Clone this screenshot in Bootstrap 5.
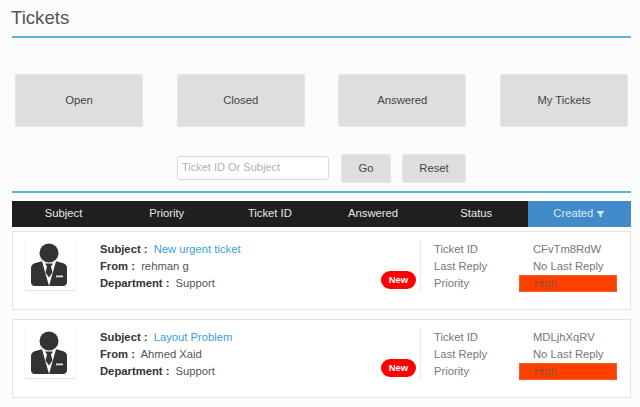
<!DOCTYPE html>
<html lang="en">
<head>
<meta charset="utf-8">
<title>Tickets</title>
<link href="https://cdn.jsdelivr.net/npm/bootstrap@5.3.0/dist/css/bootstrap.min.css" rel="stylesheet">
<style>
html,body{height:407px;overflow:hidden}
body{background:#fcfcfc;font-family:"Liberation Sans",Arial,sans-serif;font-size:11.25px;color:#555}
.tk-page{padding:0 9px 0 12px}
.tk-title{font-size:18.6px;font-weight:400;color:#555;line-height:22px;margin:0 0 0 -1px;padding:7px 0 7px 0;}
.tk-line{border-top:2px solid #5bb7da}
.tk-filters{padding:36px 3px 0}
.tk-tile{width:128px;height:53px;background:#dedede;border:1px solid #e6e6e6;border-radius:2px;color:#444;font-size:11.25px;padding:0}
.tk-search{padding:27px 0 8px 165px;height:64px}
.tk-input{width:152px;height:24px;border:1px solid #d8d8d8;border-radius:3px;background:#fff;font-size:11px;padding:0 4px 2px;color:#555;margin-right:12px;margin-top:-2px}
.tk-input::placeholder{color:#b0b0b0;opacity:1}
.tk-small{height:29px;background:#dedede;border:1px solid #e6e6e6;border-radius:2px;color:#444;font-size:11.25px;padding:0;margin-top:-1px}
.tk-go{width:50px;margin-right:11px}
.tk-reset{width:64px}
.tk-rule{margin-bottom:8px}
.tk-head{height:26px;background:#1f1f1f;color:#e8e8e8;font-size:11.25px;text-align:center;line-height:25px;margin:0 0 4px}
.tk-active{background:#428bca;color:#dce9f5}
.tk-item{height:79px;background:#fff;border:1px solid #e4e4e4;margin-bottom:9px;padding:8px 0 0 12px;line-height:17px}
.tk-avatar{width:50px;height:50px;background:#fff;box-shadow:0 1px 2px rgba(0,0,0,.14);border-radius:2px;margin-right:25px;flex:none}
.tk-avatar svg{display:block}
.tk-info{width:316px;flex:none;position:relative;padding-top:1px;color:#555}
.tk-info b{color:#333;margin-right:3px}
.tk-info a{color:#3a9fd8;text-decoration:none}
.tk-new{position:absolute;right:0;top:31px;width:35px;height:18px;border-radius:9px;background:#f00;color:#fff;font-size:9.5px;font-weight:700;line-height:17px;text-align:center}
.tk-meta{margin-left:4px;border-left:1px solid #e8e8e8;height:52px;padding:1px 0 0 13px;color:#777;flex:none;width:198px}
.tk-label{width:99px;flex:none}
.tk-val{width:85px;flex:none}
.tk-high{width:98px;height:17px;flex:none;background:#ff4000;margin-left:-14px;padding-left:14px;color:#a04a30;border:1px solid #ff5a25;line-height:15px}
</style>
</head>
<body>
<div class="tk-page">
  <h1 class="tk-title">Tickets</h1>
  <div class="tk-line"></div>
  <div class="tk-filters d-flex justify-content-between">
    <button class="btn tk-tile" type="button">Open</button>
    <button class="btn tk-tile" type="button">Closed</button>
    <button class="btn tk-tile" type="button">Answered</button>
    <button class="btn tk-tile" type="button">My Tickets</button>
  </div>
  <div class="tk-search d-flex align-items-center">
    <input class="tk-input" type="text" placeholder="Ticket ID Or Subject">
    <button class="btn tk-small tk-go" type="button">Go</button>
    <button class="btn tk-small tk-reset" type="button">Reset</button>
  </div>
  <div class="tk-line tk-rule"></div>
  <div class="row g-0 tk-head">
    <div class="col-2">Subject</div>
    <div class="col-2">Priority</div>
    <div class="col-2">Ticket ID</div>
    <div class="col-2">Answered</div>
    <div class="col-2">Status</div>
    <div class="col-2 tk-active">Created <svg width="9" height="8" viewBox="0 0 9 8"><path d="M0.5 1H8.500L5.500 4.500V7.500L3.500 6.500V4.500Z" fill="#dce9f5"/></svg></div>
  </div>

  <div class="tk-item d-flex">
    <div class="tk-avatar"><svg width="50" height="50" viewBox="0 0 50 50"><circle cx="24" cy="13" r="9.500" fill="#333"/><path d="M6 28c0-2.500 1.500-4 3.500-4.800l7.500-2 7 24.800H10c-2.500 0-4-1.500-4-4ZM42 28c0-2.500-1.500-4-3.500-4.800l-7.500-2-7 24.800h14c2.500 0 4-1.500 4-4Z" fill="#333"/><path d="M20 23.500h8l-2 3 1.500 6-3.500 5-3.500-5 1.500-6Z" fill="#333"/><rect x="31" y="35.500" width="7" height="1.800" fill="#ddd"/></svg></div>
    <div class="tk-info">
      <div><b>Subject :</b> <a href="#">New urgent ticket</a></div>
      <div><b>From :</b> rehman g</div>
      <div><b>Department :</b> Support</div>
      <span class="tk-new">New</span>
    </div>
    <div class="tk-meta">
      <div class="d-flex"><div class="tk-label">Ticket ID</div><div class="tk-val">CFvTm8RdW</div></div>
      <div class="d-flex"><div class="tk-label">Last Reply</div><div class="tk-val text-nowrap">No Last Reply</div></div>
      <div class="d-flex"><div class="tk-label">Priority</div><div class="tk-high">High</div></div>
    </div>
  </div>

  <div class="tk-item d-flex">
    <div class="tk-avatar"><svg width="50" height="50" viewBox="0 0 50 50"><circle cx="24" cy="13" r="9.500" fill="#333"/><path d="M6 28c0-2.500 1.500-4 3.500-4.800l7.500-2 7 24.800H10c-2.500 0-4-1.500-4-4ZM42 28c0-2.500-1.500-4-3.500-4.800l-7.500-2-7 24.800h14c2.500 0 4-1.500 4-4Z" fill="#333"/><path d="M20 23.500h8l-2 3 1.500 6-3.500 5-3.500-5 1.500-6Z" fill="#333"/><rect x="31" y="35.500" width="7" height="1.800" fill="#ddd"/></svg></div>
    <div class="tk-info">
      <div><b>Subject :</b> <a href="#">Layout Problem</a></div>
      <div><b>From :</b> Ahmed Xaid</div>
      <div><b>Department :</b> Support</div>
      <span class="tk-new">New</span>
    </div>
    <div class="tk-meta">
      <div class="d-flex"><div class="tk-label">Ticket ID</div><div class="tk-val">MDLjhXqRV</div></div>
      <div class="d-flex"><div class="tk-label">Last Reply</div><div class="tk-val text-nowrap">No Last Reply</div></div>
      <div class="d-flex"><div class="tk-label">Priority</div><div class="tk-high">High</div></div>
    </div>
  </div>
</div>
<script src="https://cdn.jsdelivr.net/npm/bootstrap@5.3.0/dist/js/bootstrap.bundle.min.js"></script>
</body>
</html>
